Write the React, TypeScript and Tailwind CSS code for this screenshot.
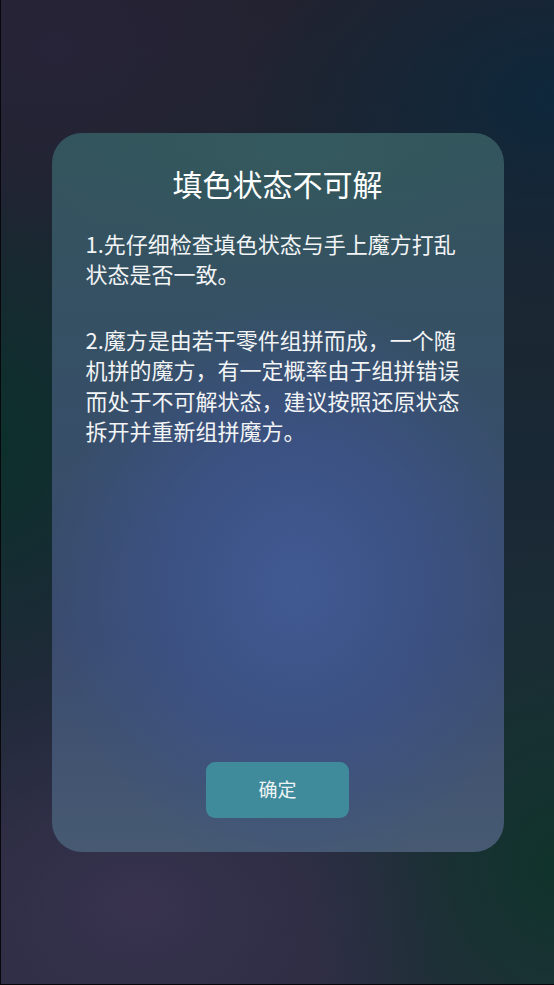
export default function App() {
  return (
    <div
      className="relative flex h-[985px] w-full items-center justify-center overflow-hidden border-b border-l border-[#08080c] bg-[#1b2331] bg-[radial-gradient(ellipse_55%_22%_at_25%_92%,#38324f_0%,transparent_100%),radial-gradient(ellipse_45%_35%_at_100%_88%,#10342c_0%,transparent_100%),radial-gradient(ellipse_30%_25%_at_0%_45%,#0d302c_0%,transparent_100%),radial-gradient(ellipse_55%_22%_at_100%_10%,#0e283b_0%,transparent_100%),radial-gradient(ellipse_45%_20%_at_10%_5%,#272338_0%,transparent_100%),linear-gradient(180deg,#22222f_0%,#182834_45%,#2a2c40_100%)]"
      style={{ fontFamily: '"Noto Sans CJK SC", "Noto Sans", sans-serif' }}
    >
      {/* Dialog card */}
      <div className="flex h-[719px] w-[452px] flex-col rounded-[30px] bg-[#3a4d6c] bg-[radial-gradient(ellipse_55%_40%_at_54%_63%,#405a92_0%,#3c5285_45%,transparent_100%),radial-gradient(ellipse_60%_18%_at_55%_2%,#34595e_0%,transparent_100%),linear-gradient(180deg,#33545c_0%,#364f66_35%,#3a4b6e_70%,#475a72_100%)] px-[34px] pb-[34px] pt-[30px] text-white">
        <h1 className="text-center text-[30px] leading-[40px] font-normal">填色状态不可解</h1>

        <div className="mt-[25px] text-[22px] leading-[30.3px] text-[#f2f4f6]">
          <p>1.先仔细检查填色状态与手上魔方打乱状态是否一致。</p>
          <p className="mt-[36px]">
            2.魔方是由若干零件组拼而成，一个随机拼的魔方，有一定概率由于组拼错误而处于不可解状态，建议按照还原状态拆开并重新组拼魔方。
          </p>
        </div>

        <div className="mt-auto flex justify-center">
          <button className="h-[56px] w-[143px] rounded-[9px] bg-[#3f8b9c] text-[19px] text-[#eef4f6]">
            确定
          </button>
        </div>
      </div>
    </div>
  );
}
